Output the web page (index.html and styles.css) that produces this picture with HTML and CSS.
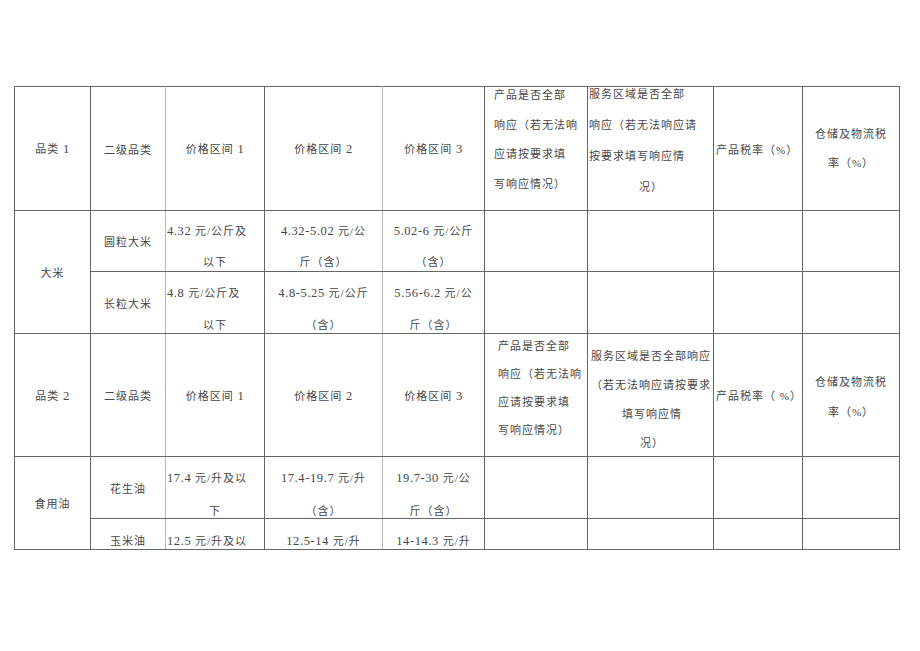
FILE: index.html
```html
<!DOCTYPE html>
<html lang="zh-CN">
<head>
<meta charset="utf-8">
<title>品类价格区间</title>
<link rel="stylesheet" href="styles.css">
</head>
<body>
<table class="sheet">
  <colgroup>
    <col class="c-cat"><col class="c-sub"><col class="c-p1"><col class="c-p2"><col class="c-p3"><col class="c-resp"><col class="c-area"><col class="c-tax"><col class="c-log">
  </colgroup>
  <tbody>
    <tr class="hd hd1">
      <td class="m">品类 <span class="n">1</span></td>
      <td class="m lr">二级品类</td>
      <td class="m ll">价格区间 <span class="n">1</span></td>
      <td class="m lr">价格区间 <span class="n">2</span></td>
      <td class="m ll">价格区间 <span class="n">3</span></td>
      <td><div class="box resp"><div class="lines"><span class="ln">产品是否全部</span><span class="ln">响应（若无法响</span><span class="ln">应请按要求填</span><span class="ln">写响应情况）</span></div></div></td>
      <td><div class="box area"><div class="lines"><span class="ln">服务区域是否全部</span><span class="ln">响应（若无法响应请</span><span class="ln">按要求填写响应情</span><span class="ln c">况）</span></div></div></td>
      <td class="ml">产品税率（%）</td>
      <td class="m log"><span class="ln">仓储及物流税</span><span class="ln">率（%）</span></td>
    </tr>
    <tr class="rice1">
      <td class="m" rowspan="2">大米</td>
      <td class="m lr">圆粒大米</td>
      <td class="ll"><div class="box pr"><span class="ln l"><span class="n">4.32</span> 元/公斤及</span><span class="ln c">以下</span></div></td>
      <td class="lr"><div class="box pr"><span class="ln c"><span class="n">4.32-5.02</span> 元/公</span><span class="ln c">斤（含）</span></div></td>
      <td class="ll"><div class="box pr"><span class="ln c"><span class="n">5.02-6</span> 元/公斤</span><span class="ln c">（含）</span></div></td>
      <td></td><td></td><td></td><td></td>
    </tr>
    <tr class="rice2">
      <td class="m lr">长粒大米</td>
      <td class="ll"><div class="box pr"><span class="ln l"><span class="n">4.8</span> 元/公斤及</span><span class="ln c">以下</span></div></td>
      <td class="lr"><div class="box pr"><span class="ln c"><span class="n">4.8-5.25</span> 元/公斤</span><span class="ln c">（含）</span></div></td>
      <td class="ll"><div class="box pr"><span class="ln c"><span class="n">5.56-6.2</span> 元/公</span><span class="ln c">斤（含）</span></div></td>
      <td></td><td></td><td></td><td></td>
    </tr>
    <tr class="hd hd2">
      <td class="m">品类 <span class="n">2</span></td>
      <td class="m lr">二级品类</td>
      <td class="m ll">价格区间 <span class="n">1</span></td>
      <td class="m lr">价格区间 <span class="n">2</span></td>
      <td class="m ll">价格区间 <span class="n">3</span></td>
      <td><div class="box resp"><div class="lines"><span class="ln">产品是否全部</span><span class="ln">响应（若无法响</span><span class="ln">应请按要求填</span><span class="ln">写响应情况）</span></div></div></td>
      <td><div class="box area"><div class="lines"><span class="ln">服务区域是否全部响应</span><span class="ln">（若无法响应请按要求</span><span class="ln c">填写响应情</span><span class="ln c">况）</span></div></div></td>
      <td class="ml">产品税率（ %）</td>
      <td class="m log"><span class="ln">仓储及物流税</span><span class="ln">率（%）</span></td>
    </tr>
    <tr class="oil1">
      <td class="m" rowspan="2">食用油</td>
      <td class="m lr">花生油</td>
      <td class="ll"><div class="box pr"><span class="ln l"><span class="n">17.4</span> 元/升及以</span><span class="ln c">下</span></div></td>
      <td class="lr"><div class="box pr"><span class="ln c"><span class="n">17.4-19.7</span> 元/升</span><span class="ln c">（含）</span></div></td>
      <td class="ll"><div class="box pr"><span class="ln c"><span class="n">19.7-30</span> 元/公</span><span class="ln c">斤（含）</span></div></td>
      <td></td><td></td><td></td><td></td>
    </tr>
    <tr class="oil2">
      <td class="lr"><div class="box pr"><span class="ln c">玉米油</span></div></td>
      <td class="ll"><div class="box pr"><span class="ln l"><span class="n">12.5</span> 元/升及以</span></div></td>
      <td class="lr"><div class="box pr"><span class="ln c"><span class="n">12.5-14</span> 元/升</span></div></td>
      <td class="ll"><div class="box pr"><span class="ln c"><span class="n">14-14.3</span> 元/升</span></div></td>
      <td></td><td></td><td></td><td></td>
    </tr>
  </tbody>
</table>
</body>
</html>
```

FILE: styles.css
```css
html, body {
  margin: 0;
  background: #ffffff;
}

.sheet {
  margin: 86px 0 0 14px;
  border-collapse: collapse;
  table-layout: fixed;
  width: 886px;
  font-family: "Liberation Serif", "Noto Sans CJK SC", serif;
  font-size: 11px;
  letter-spacing: 1px;
  color: #474747;
}

.n {
  font-size: 12.5px;
  letter-spacing: 0.6px;
}

.c-cat { width: 76px; }
.c-sub { width: 75px; }
.c-p1 { width: 99px; }
.c-p2 { width: 118px; }
.c-p3 { width: 102px; }
.c-resp { width: 103px; }
.c-area { width: 126px; }
.c-tax { width: 89px; }
.c-log { width: 97px; }

.sheet td {
  border: 1px solid #666666;
  padding: 0;
  vertical-align: top;
  white-space: nowrap;
}

.sheet td.lr { border-right-color: #b8b8b8; }
.sheet td.ll { border-left-color: #b8b8b8; }

.sheet td.m {
  vertical-align: middle;
  text-align: center;
}

.sheet td.ml {
  vertical-align: middle;
  text-align: left;
  padding-left: 2px;
}

.ln {
  display: block;
}
.ln.l { text-align: left; padding-left: 1px; }
.ln.c { text-align: center; }

.box {
  display: flow-root;
  box-sizing: border-box;
  overflow: visible;
}

/* header rows */
.hd1 .box { height: 123px; }
.hd2 .box { height: 122px; }

.hd1 .resp { padding-left: 9px; line-height: 29.5px; }
.hd1 .resp .lines { margin-top: -6px; }
.hd1 .area { padding-left: 1px; line-height: 31px; }
.hd1 .area .lines { margin-top: -8px; }
.hd1 .log { line-height: 29px; }

.hd2 .resp { padding-left: 13px; line-height: 28px; }
.hd2 .resp .lines { margin-top: -2px; }
.hd2 .area { padding: 8px 0 0 3px; line-height: 29px; }
.hd2 .log { line-height: 30px; padding-top: 4px; }

/* price / data rows */
.pr { padding-top: 5px; }
.rice1 .box { height: 60px; line-height: 31px; }
.rice2 .box { height: 61px; line-height: 32px; }
.oil1 .box { height: 61px; line-height: 33px; }
.oil2 .box { height: 30px; line-height: 32px; padding-top: 6px; }
```
